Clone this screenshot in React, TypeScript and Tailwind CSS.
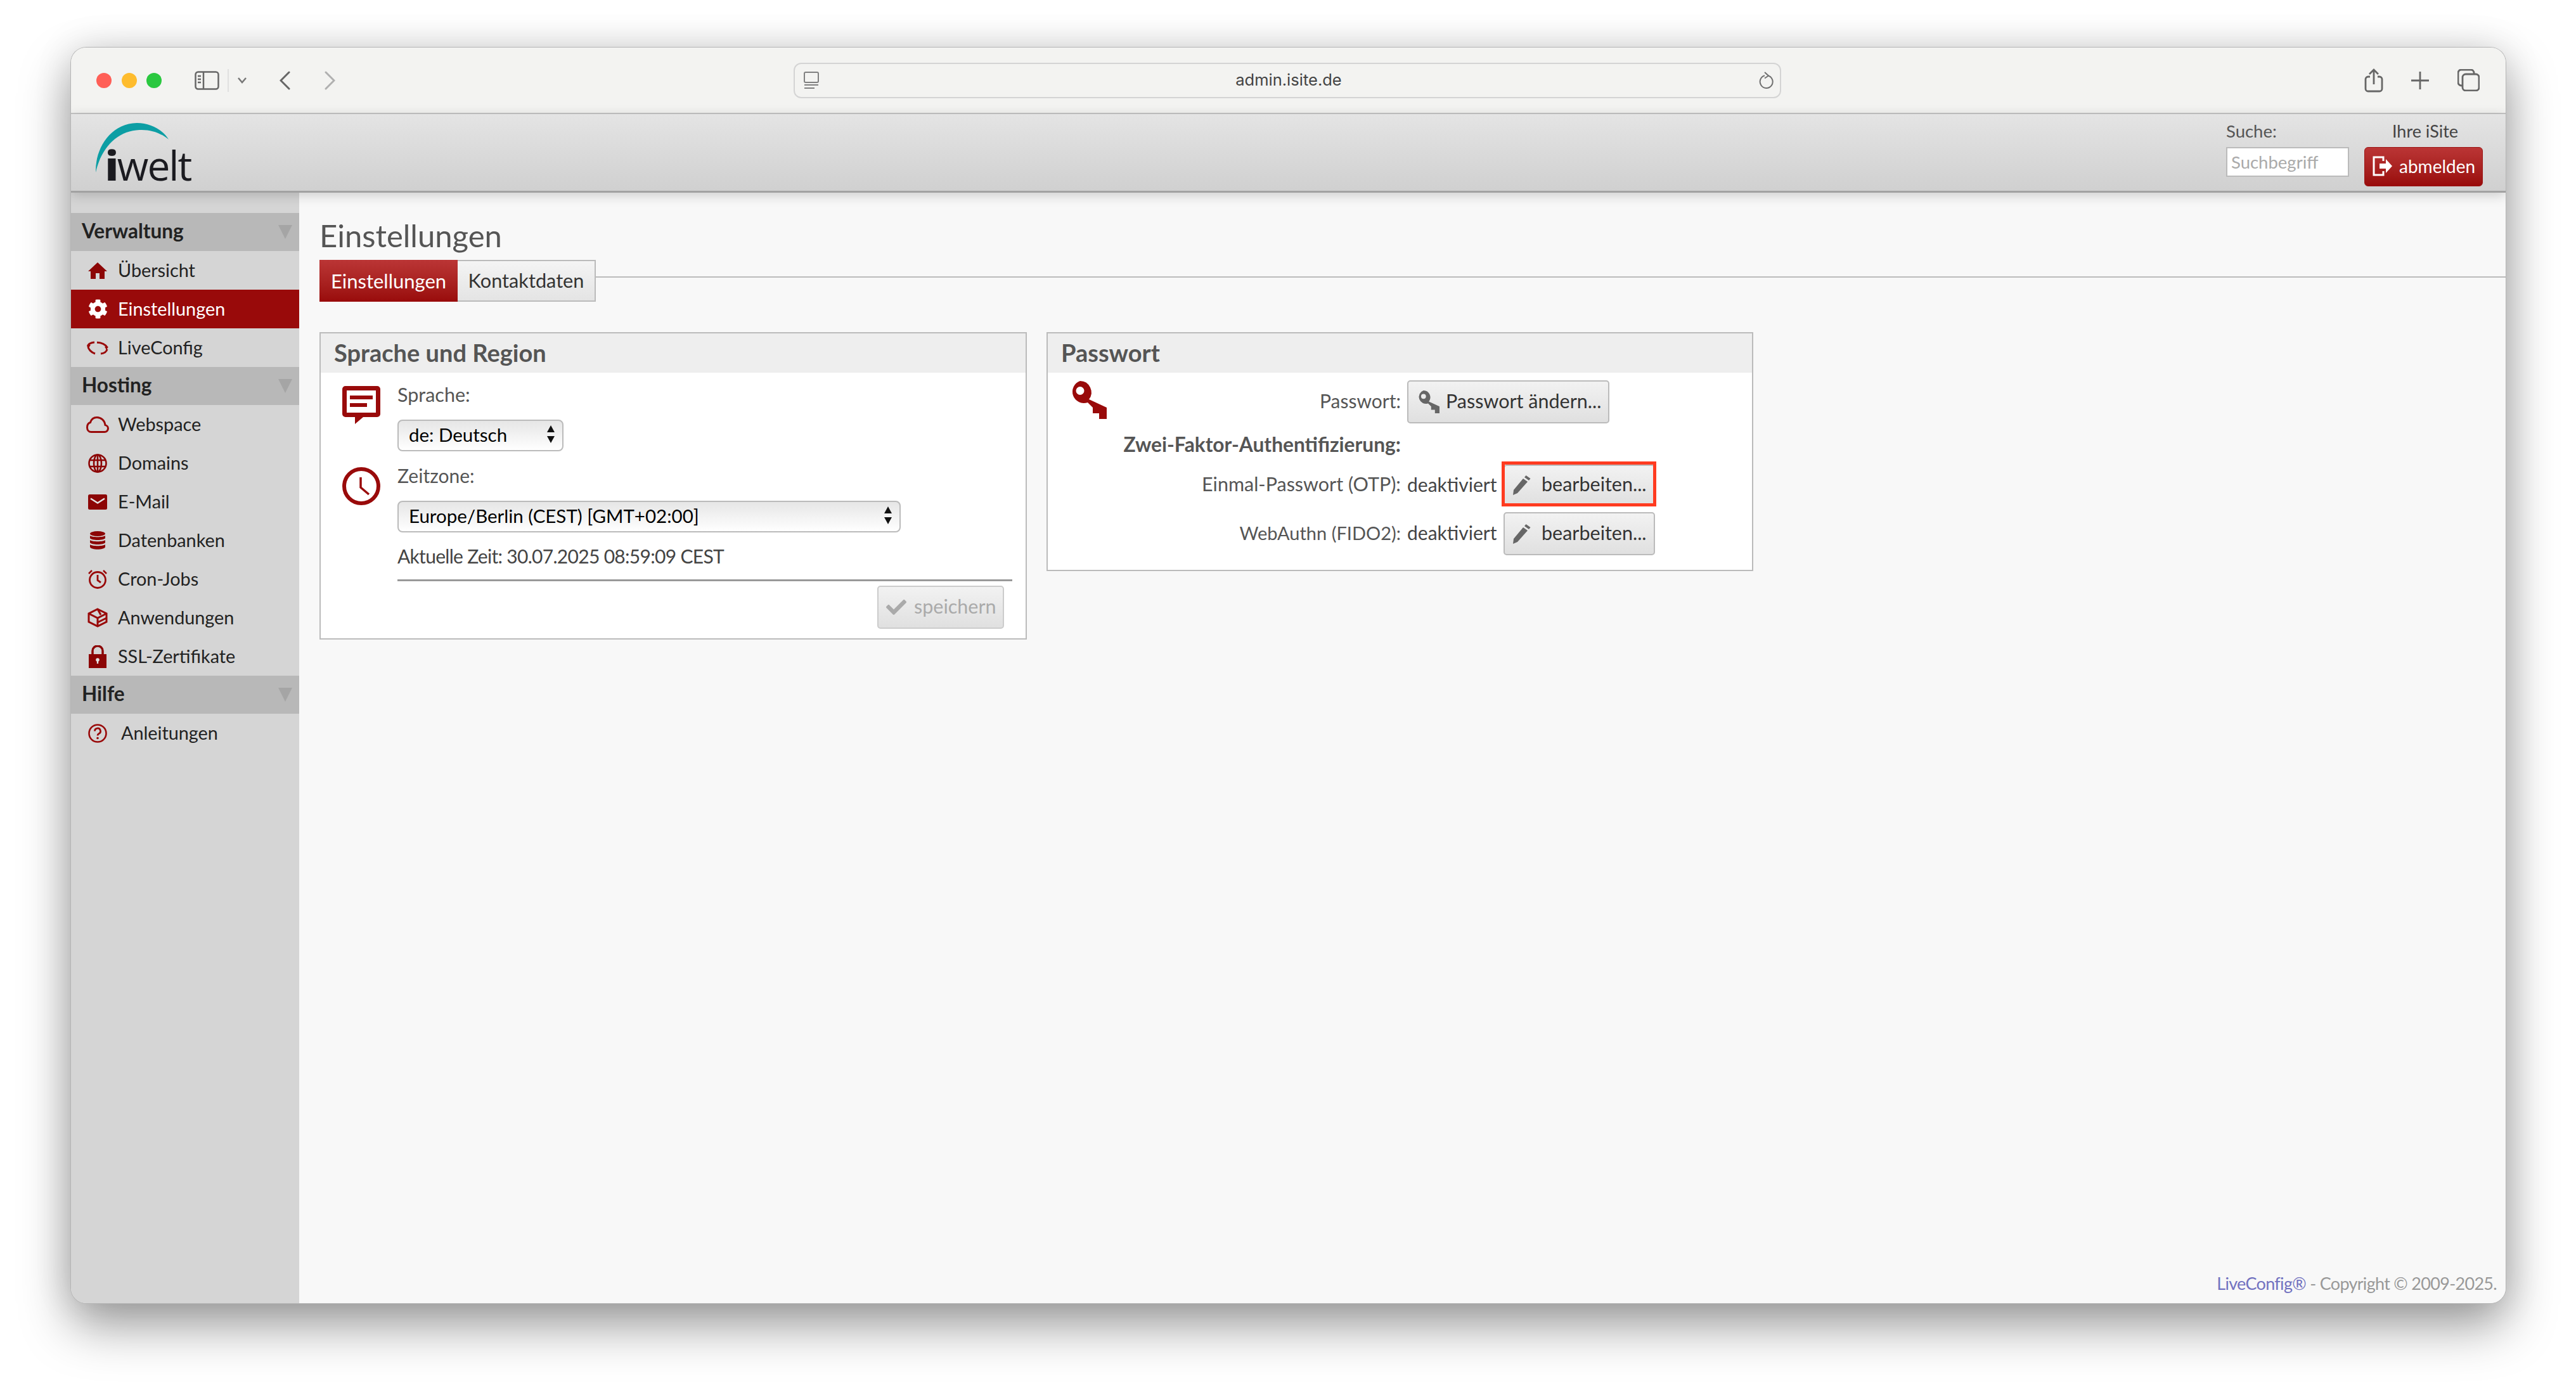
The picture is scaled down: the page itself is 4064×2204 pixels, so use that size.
import { ReactNode } from 'react'
import { FaCog, FaCheck } from 'react-icons/fa'

// Farben aus dem Screenshot
const RED = '#990a0a'
const NAV_RED = '#8c0606'

function Home() {
  return (
    <svg viewBox="0 0 30 26" className="w-[30px] h-[26px]" fill={NAV_RED}>
      <path d="M15 0l15 14h-4v12h-8v-9h-6v9H4V14H0z" />
    </svg>
  )
}

function Globe() {
  return (
    <svg viewBox="0 0 30 30" className="w-[30px] h-[30px]" fill="none" stroke={NAV_RED} strokeWidth="2.600">
      <circle cx="15" cy="15" r="13.500" />
      <ellipse cx="15" cy="15" rx="6" ry="13.500" />
      <path d="M15 1.500v27M2.500 10h25M2.500 20h25" />
    </svg>
  )
}

function Mail() {
  return (
    <svg viewBox="0 0 30 24" className="w-[30px] h-[24px]">
      <rect width="30" height="24" rx="2.500" fill={NAV_RED} />
      <path d="M4 6.500l11 7 11-7" fill="none" stroke="#e4e4e4" strokeWidth="2.500" />
    </svg>
  )
}

function Database() {
  return (
    <svg viewBox="0 0 24 29" className="w-[24px] h-[29px]" fill={NAV_RED}>
      <ellipse cx="12" cy="4" rx="12" ry="4" />
      <path d="M0 7c3 3 21 3 24 0v4c-2 4-22 4-24 0zM0 14c3 3 21 3 24 0v4c-2 4-22 4-24 0zM0 21c3 3 21 3 24 0v4c-2 5-22 5-24 0z" />
    </svg>
  )
}

function Lock() {
  return (
    <svg viewBox="0 0 28 36" className="w-[28px] h-[36px]">
      <path d="M6 16V9a8 8 0 0 1 16 0v7" fill="none" stroke={NAV_RED} strokeWidth="3.500" />
      <rect y="14" width="28" height="22" fill={NAV_RED} />
      <circle cx="14" cy="23" r="2.800" fill="#e4e4e4" />
      <path d="M12.800 24h2.400v5h-2.400z" fill="#e4e4e4" />
    </svg>
  )
}

function Cloud() {
  return (
    <svg viewBox="0 0 36 26" className="w-[36px] h-[26px]" fill="none" stroke={RED} strokeWidth="3">
      <path d="M8 24.5h21a5.5 5.5 0 0 0 1-10.9C29 6 23 1.5 17 1.5c-5 0-9 3-10.500 8C3 10.500 1.500 14 1.500 17.500 1.500 21.500 4 24.500 8 24.500z" />
    </svg>
  )
}

function LiveConfigIcon() {
  return (
    <svg viewBox="0 0 34 22" className="w-[34px] h-[22px]" fill="none" stroke={RED} strokeWidth="3">
      <path d="M12 2C6 2.500 2 5 1.800 8" />
      <path d="M1.800 8 C2 13 7 18 13 20" />
      <path d="M16 2.200C23 2.500 29 5 32 10" />
      <path d="M22 20c5-.5 9-3 10-7" />
      <path d="M0 6h6l-3 5z" fill={RED} stroke="none" />
      <path d="M28 9h6l-3 5z" fill={RED} stroke="none" />
    </svg>
  )
}

function AlarmIcon() {
  return (
    <svg viewBox="0 0 30 31" className="w-[30px] h-[31px]" fill="none" stroke={RED} strokeWidth="2.800">
      <circle cx="15" cy="17" r="12.500" />
      <path d="M15 9v8.500l5 3.500" />
      <path d="M1 7l5-5M29 7l-5-5" strokeWidth="2.500" />
    </svg>
  )
}

function CubeIcon() {
  return (
    <svg viewBox="0 0 32 31" className="w-[32px] h-[31px]" fill="none" stroke={RED} strokeWidth="3">
      <path d="M16 2l14 7v13l-14 7-14-7V9z" />
      <path d="M2 9l14 7 14-7M16 16v13M16 2l5 9M30 16l-14 7" />
    </svg>
  )
}

function HelpIcon() {
  return (
    <svg viewBox="0 0 30 30" className="w-[30px] h-[30px]" fill="none" stroke={RED} strokeWidth="2.600">
      <circle cx="15" cy="15" r="13.500" />
      <path d="M10.500 11.500a4.500 4.500 0 1 1 6.500 4c-1.400.8-2 1.500-2 3" strokeWidth="2.800" />
      <circle cx="15" cy="22.500" r="1.800" fill={RED} stroke="none" />
    </svg>
  )
}

function KeyIcon({ className, color }: { className: string; color: string }) {
  return (
    <svg viewBox="0 0 60 60" className={className}>
      <path
        fill={color}
        fillRule="evenodd"
        d="M18 0a18 18 0 0 1 14 29L60 42v18H48v-9H38v-9L30 34A18 18 0 1 1 18 0zm0 9a6.500 6.500 0 1 0 0 13 6.500 6.500 0 0 0 0-13z"
      />
    </svg>
  )
}

function PencilIcon() {
  return (
    <svg viewBox="0 0 31 31" className="w-[31px] h-[31px]" fill="#666">
      <path d="M0 31l1-8L16 5l7 5L7 28z" />
      <path d="M18 3l2.500-3 7 5-2.500 3z" />
    </svg>
  )
}

function SelectBox({ value, className }: { value: string; className: string }) {
  return (
    <div className={`relative ${className}`}>
      <select
        defaultValue={value}
        className="appearance-none w-full h-full rounded-[8px] border-2 border-[#bbbbbb] bg-gradient-to-b from-[#e6e6e6] to-[#ffffff] pl-[16px] pb-[3px] text-[29.500px] text-black outline-none"
      >
        <option>{value}</option>
      </select>
      <svg viewBox="0 0 12 28" className="absolute right-[14px] top-[9px] w-[12px] h-[28px]" fill="#111">
        <path d="M6 0l6 11H0zM0 17h12L6 28z" />
      </svg>
    </div>
  )
}

function Button({ icon, label, className, muted }: { icon: ReactNode; label: string; className: string; muted?: boolean }) {
  return (
    <button
      className={`flex items-center shrink-0 rounded-[5px] border-2 bg-gradient-to-b from-[#f2f2f2] to-[#e0e0e0] text-[30.500px] ${
        muted ? 'border-[#cccccc] text-[#aaaaaa]' : 'border-[#bbbbbb] text-[#333333]'
      } ${className}`}
    >
      {icon}
      <span className="pb-[3px]">{label}</span>
    </button>
  )
}

function SectionHead({ label }: { label: string }) {
  return (
    <div className="h-[60px] bg-[#b8b8b8] flex items-center justify-between pl-[17px] pr-[11px]">
      <span className="text-[31.500px] -mt-[2px] font-bold text-[#222222]">{label}</span>
      <svg viewBox="0 0 22 22" className="w-[22px] h-[22px]" fill="#a5a5a5">
        <path d="M0 0h22L11 22z" />
      </svg>
    </div>
  )
}

function NavItem({ icon, label, active, pad }: { icon: ReactNode; label: string; active?: boolean; pad?: string }) {
  return (
    <div
      className={`h-[61px] flex items-center ${active ? 'bg-[#990a0a] text-white' : 'text-[#222222]'}`}
    >
      <span className={`w-[74px] shrink-0 flex justify-center pl-[10px] ${active ? 'text-white' : 'text-[#8c0606]'}`}>{icon}</span>
      <span className={`text-[28.800px] ${pad ?? ''}`}>{label}</span>
    </div>
  )
}

function Card({ title, className, children }: { title: string; className: string; children: ReactNode }) {
  return (
    <section className={`border-2 border-[#bbbbbb] bg-white shrink-0 ${className}`}>
      <h2 className="h-[62px] bg-[#eeeeee] flex items-center pl-[21px] pb-[2px] text-[38px] font-bold text-[#555555]">{title}</h2>
      {children}
    </section>
  )
}

export default function App() {
  return (
    <div className="w-full h-[2204px] bg-white pt-[75px] pl-[112px] overflow-hidden [font-family:Lato,sans-serif]">
      <div className="w-[3841px] h-[1981px] rounded-[24px] overflow-hidden flex flex-col shadow-[0_0_0_1px_#b5b5b5,0_36px_80px_rgba(0,0,0,0.38),0_0_60px_rgba(0,0,0,0.12)]">
        {/* Safari Titelleiste */}
        <div className="h-[105px] shrink-0 bg-[#f3f3f1] border-b-2 border-[#c5c5c5] flex items-center relative">
          <div className="flex items-center gap-[15.500px] ml-[40px]">
            <span className="w-[24px] h-[24px] rounded-full bg-[#ff5f57]" />
            <span className="w-[24px] h-[24px] rounded-full bg-[#febc2e]" />
            <span className="w-[24px] h-[24px] rounded-full bg-[#2ac840]" />
          </div>
          <svg viewBox="0 0 39 30" className="w-[39px] h-[30px] ml-[52px]" fill="none" stroke="#666" strokeWidth="2.500">
            <rect x="1.500" y="1.500" width="36" height="27" rx="4" />
            <path d="M14 1.500v27M5 8h5M5 13h5M5 18h5" />
          </svg>
          <span className="w-[2px] h-[36px] bg-[#e0e0e0] ml-[13px]" />
          <svg viewBox="0 0 14 10" className="w-[14px] h-[10px] ml-[14px]" fill="none" stroke="#777" strokeWidth="2.500">
            <path d="M1 1l6 7 6-7" />
          </svg>
          <svg viewBox="0 0 17 30" className="w-[17px] h-[30px] ml-[52px]" fill="none" stroke="#666" strokeWidth="3" strokeLinecap="round">
            <path d="M15 2L2 15l13 13" />
          </svg>
          <svg viewBox="0 0 17 30" className="w-[17px] h-[30px] ml-[54px]" fill="none" stroke="#b0b0b0" strokeWidth="3" strokeLinecap="round">
            <path d="M2 2l13 13L2 28" />
          </svg>

          <div className="w-[1558px] h-[56px] ml-[723px] rounded-[12px] border-2 border-[#d4d4d4] flex items-center justify-between pl-[14px] pr-[10px]">
            <svg viewBox="0 0 24 28" className="w-[24px] h-[28px]" fill="none" stroke="#808080" strokeWidth="2">
              <rect x="1" y="1" width="22" height="16" rx="2" />
              <path d="M1 21h22M1 26h16" />
            </svg>
            <span className="text-[25.500px] text-[#444444] [font-family:Inter,sans-serif]">admin.isite.de</span>
            <svg viewBox="0 0 24 28" className="w-[24px] h-[28px]" fill="none" stroke="#707070" strokeWidth="2">
              <path d="M16 6.500a10 10 0 1 1-6-.2" />
              <path d="M10 1l6 5.500-6 4" />
            </svg>
          </div>

          <svg viewBox="0 0 30 38" className="w-[30px] h-[38px] ml-[920px]" fill="none" stroke="#666" strokeWidth="2.800">
            <path d="M9 13H6a4 4 0 0 0-4 4v15a4 4 0 0 0 4 4h18a4 4 0 0 0 4-4V17a4 4 0 0 0-4-4h-3M15 25V2M8 9l7-7 7 7" />
          </svg>
          <svg viewBox="0 0 28 28" className="w-[28px] h-[28px] ml-[44px]" fill="none" stroke="#666" strokeWidth="2.800">
            <path d="M14 0v28M0 14h28" />
          </svg>
          <svg viewBox="0 0 35 35" className="w-[35px] h-[35px] ml-[45px]" fill="none" stroke="#666" strokeWidth="2.800">
            <rect x="8" y="8" width="26" height="26" rx="5" />
            <path d="M8 26H6a5 5 0 0 1-5-5V6a5 5 0 0 1 5-5h15a5 5 0 0 1 5 5v2" />
          </svg>
        </div>

        {/* Kopfbereich */}
        <header className="relative z-10 h-[124px] shrink-0 border-b-[3px] border-[#a2a2a2] bg-gradient-to-b from-[#e4e4e4] to-[#d0d0d0] shadow-[0_4px_18px_rgba(0,0,0,0.18)] flex justify-between">
          <div className="relative ml-[38px] w-[152px]">
            <svg viewBox="0 0 116 80" className="absolute left-0 top-[14px] w-[116px] h-[80px]" fill="none">
              <path d="M1 78C0 40 24 1 66 0c22 0 42 12 50 26-12-10-28-16-46-15C36 12 10 38 1 78z" fill="#0c9ea4" />
            </svg>
            <span className="absolute left-[16px] top-[41px] text-[64px] leading-[80px] tracking-[-2px] text-[#1b1b20] [font-family:'Open_Sans',sans-serif]">
              <b className="font-extrabold">i</b>welt
            </span>
          </div>
          <div className="flex mr-[36px] gap-[24px]">
            <div className="flex flex-col w-[194px] pt-[12px]">
              <span className="text-[27.500px] leading-[30px] text-[#555555]">Suche:</span>
              <input
                placeholder="Suchbegriff"
                className="mt-[10px] w-[194px] h-[47px] border-2 border-[#bbbbbb] bg-white pl-[6px] text-[27.500px] placeholder:text-[#aaaaaa] outline-none"
              />
            </div>
            <div className="flex flex-col items-center w-[187px] pt-[12px] pl-[5px]">
              <span className="text-[27px] leading-[30px] text-[#444444]">Ihre iSite</span>
              <button className="mt-[10px] -ml-[5px] w-[187px] h-[62px] rounded-[6px] border border-[#9b1414] bg-gradient-to-b from-[#bb3535] to-[#990a0a] flex items-center pl-[12px] pb-[3px] gap-[10px] text-[28px] text-white">
                <svg viewBox="0 0 32 32" className="w-[32px] h-[32px]" fill="none" stroke="#fff" strokeWidth="3">
                  <path d="M17 8V2H2v28h15v-6" />
                  <path d="M11 12h10V5l10 11-10 11v-7H11z" fill="#fff" stroke="none" />
                </svg>
                abmelden
              </button>
            </div>
          </div>
        </header>

        <div className="flex-1 flex min-h-0">
          {/* Navigation */}
          <nav className="w-[360px] shrink-0 bg-[#d5d5d5] pt-[32px]">
            <SectionHead label="Verwaltung" />
            <NavItem icon={<Home />} label="Übersicht" />
            <NavItem icon={<FaCog size={31} />} label="Einstellungen" active />
            <NavItem icon={<LiveConfigIcon />} label="LiveConfig" />
            <SectionHead label="Hosting" />
            <NavItem icon={<Cloud />} label="Webspace" />
            <NavItem icon={<Globe />} label="Domains" />
            <NavItem icon={<Mail />} label="E-Mail" />
            <NavItem icon={<Database />} label="Datenbanken" />
            <NavItem icon={<AlarmIcon />} label="Cron-Jobs" />
            <NavItem icon={<CubeIcon />} label="Anwendungen" />
            <NavItem icon={<Lock />} label="SSL-Zertifikate" />
            <SectionHead label="Hilfe" />
            <NavItem icon={<HelpIcon />} label="Anleitungen" pad="ml-[5px]" />
          </nav>

          {/* Inhalt */}
          <main className="flex-1 bg-[#f8f8f8] flex flex-col min-w-0">
            <h1 className="h-[106px] shrink-0 pl-[32px] pt-[35px] text-[49px] leading-[64px] text-[#555555]">Einstellungen</h1>
            <div className="flex pl-[32px] shrink-0">
              <span className="w-[218px] h-[66px] bg-gradient-to-b from-[#bb3535] to-[#990a0a] flex items-center justify-center text-[31px] text-white">
                Einstellungen
              </span>
              <span className="w-[218px] h-[66px] border-2 border-l-0 border-[#bbbbbb] bg-gradient-to-b from-[#f4f4f4] to-[#e4e4e4] flex items-center justify-center text-[30.700px] text-[#333333]">
                Kontaktdaten
              </span>
              <span className="flex-1 h-[2px] mt-[26px] bg-[#bbbbbb]" />
            </div>

            <div className="flex items-start gap-[31px] pl-[32px] mt-[48px]">
              <Card title="Sprache und Region" className="w-[1116px] h-[485px]">
                <div className="flex pl-[34px] pt-[19px]">
                  <svg viewBox="0 0 60 60" className="w-[60px] h-[60px] shrink-0 mt-[2px]">
                    <path
                      fill={RED}
                      fillRule="evenodd"
                      d="M5 0h50a5 5 0 0 1 5 5v39a5 5 0 0 1-5 5H33L20 60V49H5a5 5 0 0 1-5-5V5a5 5 0 0 1 5-5zm2 7v35h46V7z"
                    />
                    <path fill={RED} d="M12 15h36v6H12zM12 27h27v6H12z" />
                  </svg>
                  <div className="ml-[27px]">
                    <div className="text-[30.500px] leading-[30px] pb-[4px] text-[#555555]">Sprache:</div>
                    <SelectBox value="de: Deutsch" className="w-[262px] h-[50px] mt-[21px]" />
                  </div>
                </div>
                <div className="flex pl-[34px] mt-[23px]">
                  <svg viewBox="0 0 60 60" className="w-[60px] h-[60px] shrink-0 mt-[2px]" fill="none" stroke={RED}>
                    <circle cx="30" cy="30" r="27" strokeWidth="6" />
                    <path d="M29 16v16l13 11" strokeWidth="3.500" />
                  </svg>
                  <div className="ml-[27px]">
                    <div className="text-[30px] leading-[30px] pb-[4px] text-[#555555]">Zeitzone:</div>
                    <SelectBox value="Europe/Berlin (CEST) [GMT+02:00]" className="w-[794px] h-[50px] mt-[21px]" />
                    <div className="text-[30px] leading-[30px] pb-[4px] tracking-[-0.7px] text-[#444444] mt-[22px]">Aktuelle Zeit: 30.07.2025 08:59:09 CEST</div>
                  </div>
                </div>
                <div className="ml-[121px] mr-[21px] mt-[18px] h-[3px] bg-[#999999]" />
                <div className="flex justify-end mr-[34px] mt-[7px]">
                  <Button
                    muted
                    icon={<FaCheck size={32} className="text-[#aaaaaa] mr-[12px]" />}
                    label="speichern"
                    className="w-[200px] h-[68px] pl-[12px]"
                  />
                </div>
              </Card>

              <Card title="Passwort" className="w-[1115px] h-[377px]">
                <div className="relative pt-[12px]">
                  <KeyIcon className="absolute left-[33px] top-[13px] w-[60px] h-[60px]" color={RED} />
                  <div className="flex items-center h-[68px]">
                    <span className="w-[557px] pb-[3px] text-right text-[30px] text-[#555555]">Passwort:</span>
                    <Button
                      icon={<KeyIcon className="w-[36px] h-[36px] mr-[10px]" color="#666666" />}
                      label="Passwort ändern..."
                      className="w-[319px] h-[68px] ml-[10px] pl-[13px]"
                    />
                  </div>
                  <div className="w-[557px] text-right text-[31.700px] leading-[30px] pb-[4px] font-bold text-[#555555] mt-[18px]">
                    Zwei-Faktor-Authentifizierung:
                  </div>
                  <div className="flex items-center h-[65px] mt-[13px]">
                    <span className="w-[557px] pb-[3px] text-right text-[30.500px] text-[#555555]">Einmal-Passwort (OTP):</span>
                    <span className="w-[152px] ml-[10px] pb-[3px] text-[30px] text-[#444444]">deaktiviert</span>
                    <div className="relative">
                      <Button
                        icon={<PencilIcon />}
                        label="bearbeiten..."
                        className="w-[239px] h-[65px] pl-[13px] gap-[14px]"
                      />
                      {/* rote Markierung aus dem Screenshot */}
                      <span className="absolute -top-[5px] -bottom-[1px] -left-[3px] -right-[2px] border-[5px] border-[#ff3b20]" />
                    </div>
                  </div>
                  <div className="flex items-center h-[68px] mt-[10px]">
                    <span className="w-[557px] pb-[3px] text-right text-[29px] text-[#555555]">WebAuthn (FIDO2):</span>
                    <span className="w-[152px] ml-[10px] pb-[3px] text-[30px] text-[#444444]">deaktiviert</span>
                    <Button
                      icon={<PencilIcon />}
                      label="bearbeiten..."
                      className="w-[239px] h-[68px] pl-[13px] gap-[14px]"
                    />
                  </div>
                </div>
              </Card>
            </div>

            <div className="mt-auto flex justify-end pr-[14px] pb-[14px] text-[27px] leading-[34px] tracking-[-0.7px] text-[#999999]">
              <span>
                <span className="text-[#7272c0]">LiveConfig®</span> - Copyright © 2009-2025.
              </span>
            </div>
          </main>
        </div>
      </div>
    </div>
  )
}
